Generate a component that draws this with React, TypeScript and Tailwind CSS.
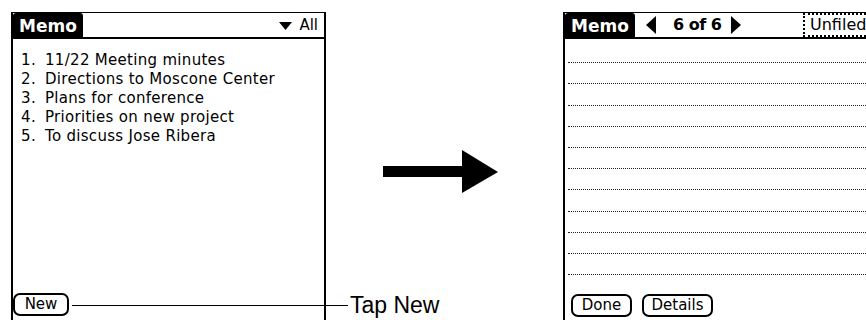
const palm = "font-['DejaVu_Sans',sans-serif]";

const memos = [
  "11/22 Meeting minutes",
  "Directions to Moscone Center",
  "Plans for conference",
  "Priorities on new project",
  "To discuss Jose Ribera",
];

function PalmButton({ label, className = "" }: { label: string; className?: string }) {
  return (
    <div
      className={`flex h-[23px] items-center justify-center rounded-[7px] border-2 border-black px-2 text-[15px] leading-none text-black ${className}`}
    >
      {label}
    </div>
  );
}

function TitleTab() {
  return (
    <div className="flex h-[26px] w-[70px] shrink-0 items-center justify-center rounded-t-[3px] bg-black text-[17px] font-bold leading-none text-white">
      Memo
    </div>
  );
}

function ListScreen() {
  return (
    <div className={`ml-[11px] mt-[12px] flex h-[320px] w-[315px] shrink-0 flex-col border-x-2 border-t border-black ${palm}`}>
      <div className="flex items-stretch">
        <TitleTab />
        <div className="flex flex-1 items-center justify-end gap-[7px] border-b-2 border-black pr-[6px] text-[15px] leading-none">
          <svg width="13" height="8" viewBox="0 0 13 8" className="mt-px">
            <polygon points="0,0 13,0 6.5,8" fill="black" />
          </svg>
          <span>All</span>
        </div>
      </div>
      <ol className="mt-[12px] flex flex-col text-[15px] leading-[19px] tracking-[0.3px]">
        {memos.map((m, i) => (
          <li key={m} className="flex">
            <span className="w-[23px] text-right">{i + 1}.</span>
            <span className="ml-[9px]">{m}</span>
          </li>
        ))}
      </ol>
      <div className="mt-auto mb-[16px] flex">
        <PalmButton label="New" className="w-[56px]" />
      </div>
    </div>
  );
}

function EditScreen() {
  return (
    <div className={`mt-[12px] flex h-[320px] flex-1 flex-col border-l-2 border-t border-black ${palm}`}>
      <div className="flex items-stretch">
        <TitleTab />
        <div className="flex w-[168px] items-center border-b-2 border-black pl-[11px] text-[16px] font-bold leading-none">
          <svg width="10" height="18" viewBox="0 0 10 18">
            <polygon points="10,0 10,18 0,9" fill="black" />
          </svg>
          <span className="ml-[17px] tracking-[-0.5px]">6 of 6</span>
          <svg width="10" height="18" viewBox="0 0 10 18" className="ml-[10px]">
            <polygon points="0,0 0,18 10,9" fill="black" />
          </svg>
        </div>
        <div className="flex flex-1 border-b-2 border-black">
          <div className="flex flex-1 items-center border-2 border-r-0 border-dotted border-black pl-[5px] text-[16px] leading-none">
            Unfiled
          </div>
        </div>
      </div>
      <div className="mt-[3px] flex flex-col pl-[3px]">
        {Array.from({ length: 11 }).map((_, i) => (
          <div key={i} className="h-[21.2px] border-b border-dotted border-[#222]" />
        ))}
      </div>
      <div className="mt-[19px] flex gap-[10px] pl-[6px]">
        <PalmButton label="Done" className="w-[61px]" />
        <PalmButton label="Details" className="w-[71px]" />
      </div>
    </div>
  );
}

export default function App() {
  return (
    <div className="relative flex h-[320px] w-[866px] overflow-hidden bg-white text-black">
      <ListScreen />
      <div className="w-[237px] shrink-0">
        <svg width="115" height="44" viewBox="0 0 115 44" className="ml-[57px] mt-[150px]">
          <rect x="0" y="16" width="80" height="11" fill="black" />
          <polygon points="79,0 115,22 79,43" fill="black" />
        </svg>
      </div>
      <EditScreen />
      {/* callout */}
      <div className="absolute left-[72px] top-[294px] flex items-center">
        <div className="h-px w-[276px] bg-black" />
        <span className="ml-[2px] font-['Liberation_Sans',sans-serif] text-[23px] leading-none">Tap New</span>
      </div>
    </div>
  );
}
